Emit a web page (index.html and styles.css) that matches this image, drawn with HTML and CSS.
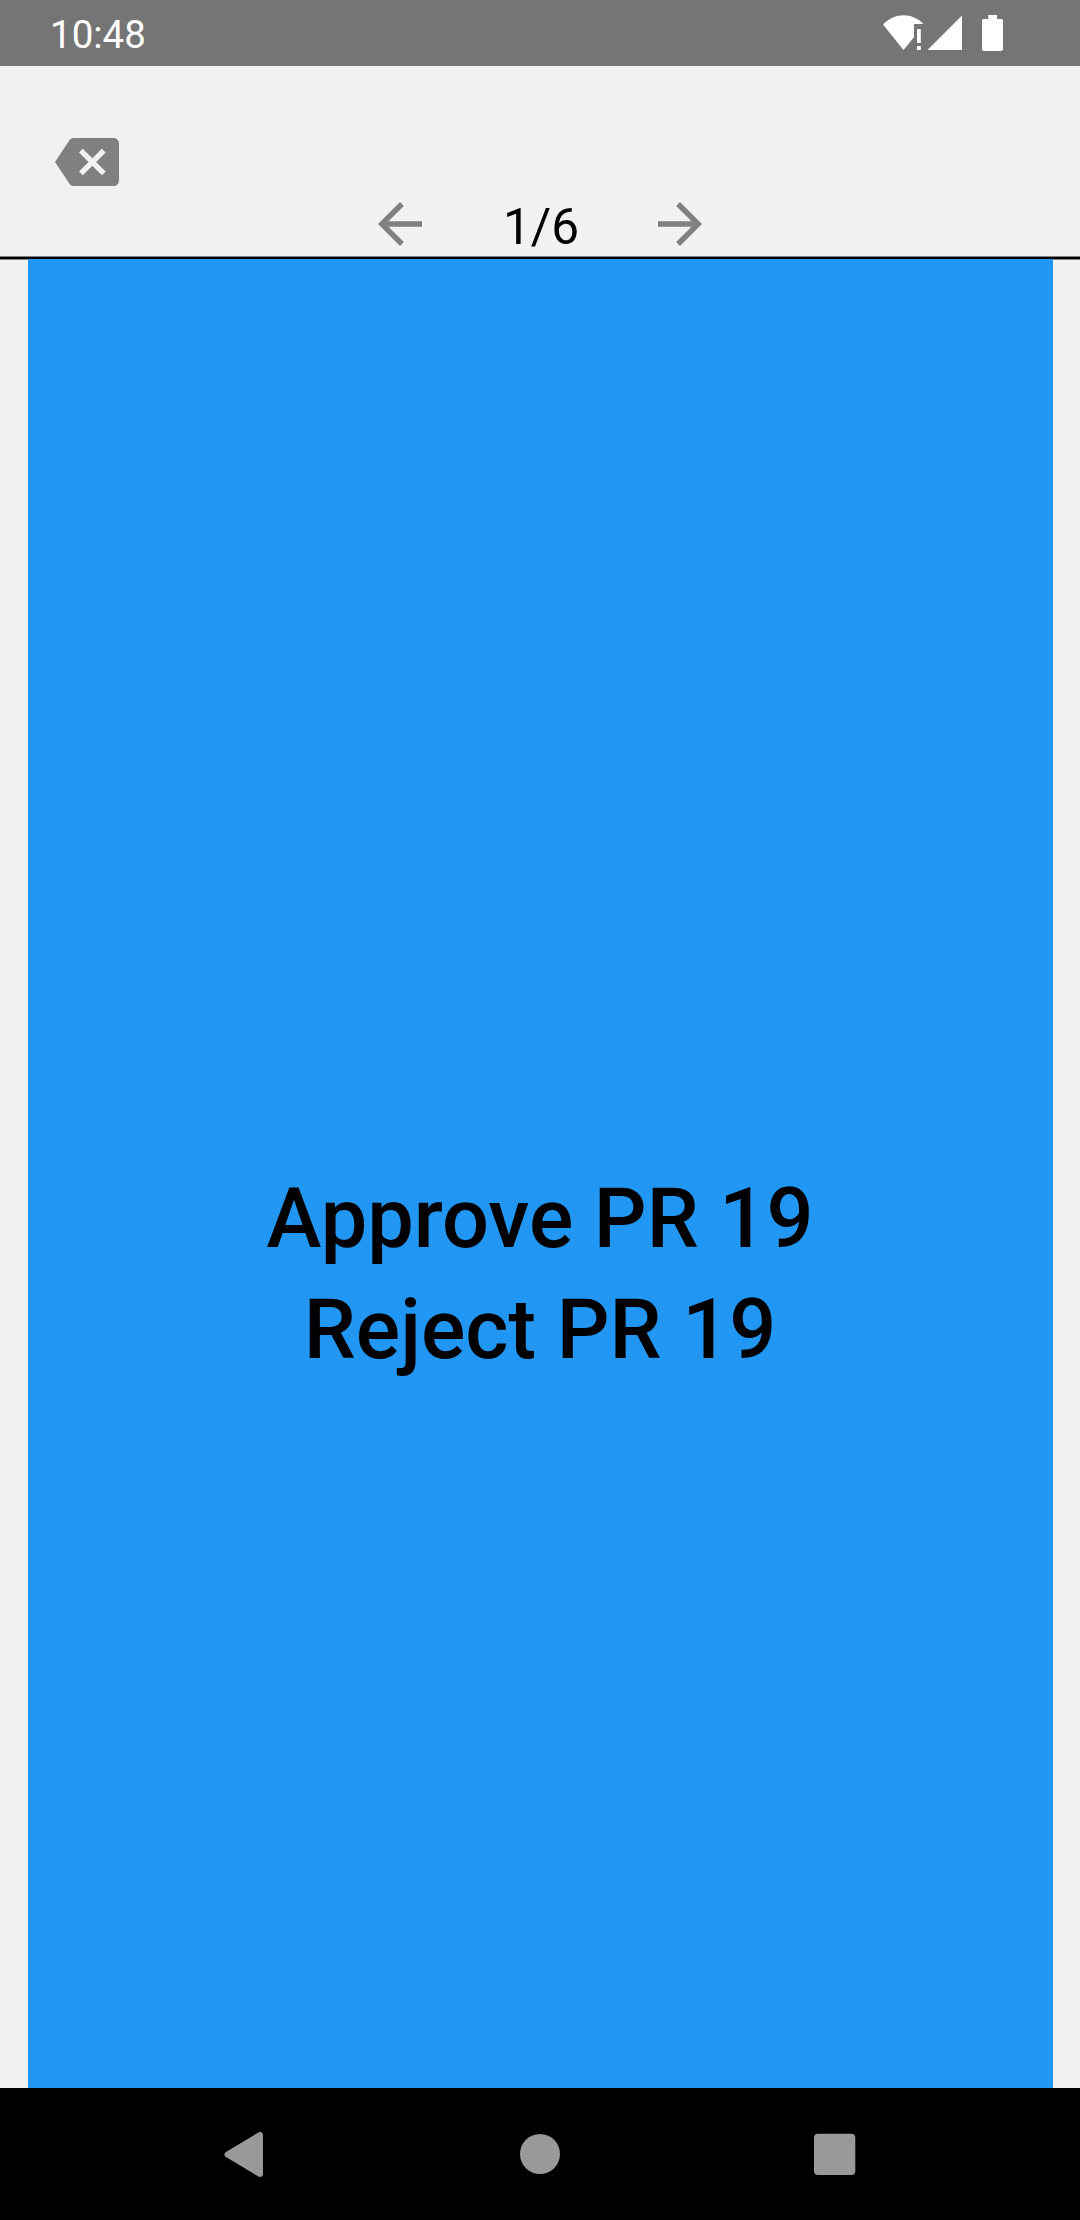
FILE: index.html
```html
<!DOCTYPE html>
<html lang="en">
<head>
<meta charset="utf-8">
<title>Pull requests</title>
<link rel="stylesheet" href="styles.css">
</head>
<body>
<div class="screen">
  <header class="status">
    <span class="clock">10:48</span>
    <svg class="status-icons" width="122" height="38" viewBox="0 0 122 38" fill="#fff" aria-hidden="true">
      <path d="M0 9.6C12-2.6 29-2.6 40.4 9H31V22.2L20.5 35Z"/>
      <path d="M34 14H37.8V28H34ZM34 31H37.8V35H34Z"/>
      <path d="M79 .5V35H44.5Z"/>
      <path d="M105.3 0H114V4H118.5Q120 4 120 5.5V34Q120 36 118 36H101Q99 36 99 34V5.5Q99 4 100.5 4H105.3Z"/>
    </svg>
  </header>
  <nav class="toolbar">
    <button class="icon-button" aria-label="Clear">
      <svg width="64" height="64" viewBox="0 0 24 24"><path d="M22 3H7c-.69 0-1.23.35-1.59.88L0 12l5.41 8.11c.36.53.9.89 1.59.89h15c1.1 0 2-.9 2-2V5c0-1.1-.9-2-2-2zm-3 12.59L17.59 17 14 13.41 10.41 17 9 15.59 12.59 12 9 8.41 10.41 7 14 10.59 17.59 7 19 8.41 15.41 12 19 15.59z"/></svg>
    </button>
    <div class="pager">
      <button class="icon-button" aria-label="Previous">
        <svg width="66" height="66" viewBox="0 0 24 24"><path d="M20 11H7.83l5.59-5.59L12 4l-8 8 8 8 1.41-1.41L7.83 13H20v-2z"/></svg>
      </button>
      <span class="page">1/6</span>
      <button class="icon-button" aria-label="Next">
        <svg width="66" height="66" viewBox="0 0 24 24"><path d="M12 4l-1.41 1.41L16.17 11H4v2h12.17l-5.58 5.59L12 20l8-8z"/></svg>
      </button>
    </div>
  </nav>
  <main class="card">
    <div class="action">Approve PR 19</div>
    <div class="action">Reject PR 19</div>
  </main>
  <footer class="system-nav">
    <svg width="42" height="46" viewBox="0 0 42 46"><path d="M3.5 23.5L36 4V43Z" stroke="#999" stroke-width="6" stroke-linejoin="round"/></svg>
    <svg width="40" height="40" viewBox="0 0 40 40"><circle cx="20" cy="20" r="20"/></svg>
    <svg width="42" height="42" viewBox="0 0 42 42"><rect y=".7" width="41.3" height="41.3" rx="4"/></svg>
  </footer>
</div>
</body>
</html>
```
FILE: styles.css
```css
* { box-sizing: border-box; }
body {
  margin: 0;
  font-family: Roboto, sans-serif;
  color: #000;
  background: #f1f1f1;
}
.screen {
  display: flex;
  flex-direction: column;
  width: 1080px;
  height: 2220px;
}
.status {
  display: flex;
  justify-content: space-between;
  align-items: flex-start;
  height: 66px;
  padding: 15px 75px 0 50px;
  background: #757575;
}
.clock {
  font-size: 38.5px;
  line-height: 40px;
  color: #fff;
}
.status-icons { display: block; }
.toolbar {
  height: 193px;
  padding: 64px 0 0 55px;
  border-bottom: 2px solid #000;
  box-shadow: inset 0 -1px #808080, 0 1px #808080;
}
.icon-button {
  display: block;
  padding: 0;
  border: 0;
  background: none;
}
.icon-button svg {
  display: block;
  fill: #808080;
}
.pager {
  display: flex;
  justify-content: center;
  height: 63px;
  margin: -3px 0 0 -55px;
}
.page {
  width: 214px;
  padding: 5px 0 0 2px;
  font-size: 49.5px;
  line-height: 62px;
  text-align: center;
}
.card {
  flex: 1;
  display: flex;
  flex-direction: column;
  align-items: center;
  justify-content: center;
  padding: 201px 1px 0 0;
  margin: 0 27px 0 28px;
  background: #2196f3;
}
.action {
  font-size: 82.8px;
  font-weight: 500;
  line-height: 111px;
}
.system-nav {
  display: grid;
  grid-template-columns: 42px 40px 42px;
  column-gap: 254px;
  justify-content: center;
  align-items: center;
  height: 132px;
  background: #000;
}
.system-nav svg {
  display: block;
  fill: #999;
}
```
